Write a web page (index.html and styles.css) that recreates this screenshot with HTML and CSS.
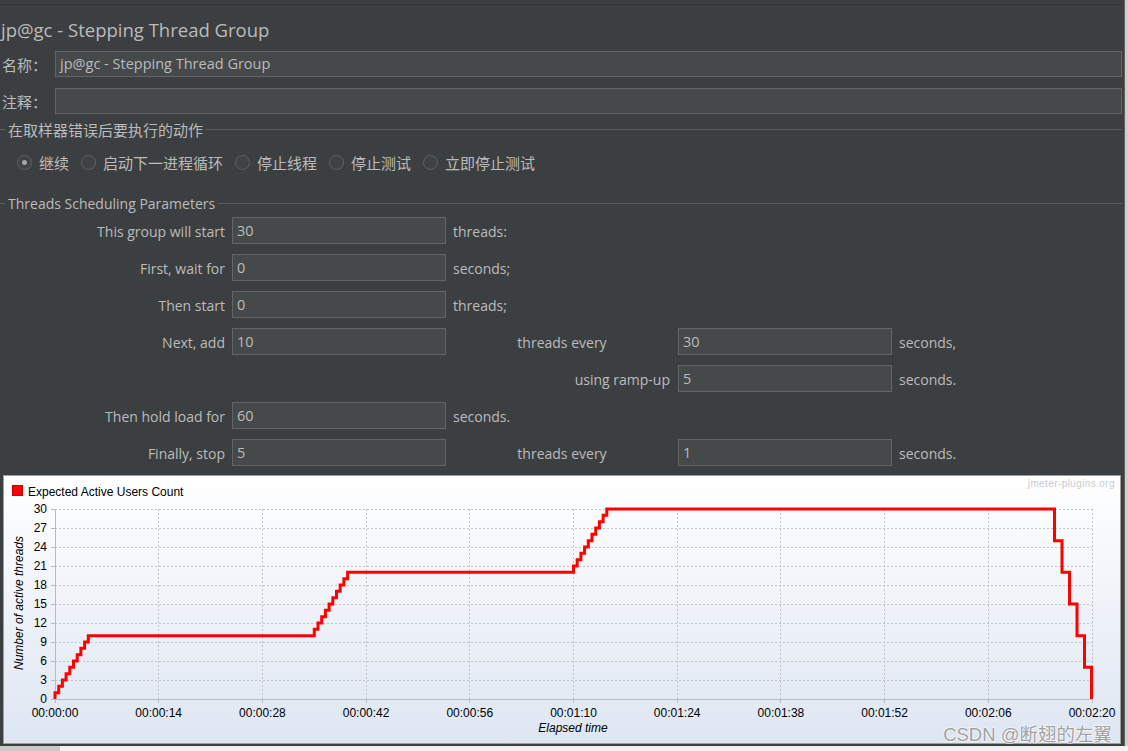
FILE: index.html
```html
<!DOCTYPE html>
<html lang="zh">
<head>
<meta charset="utf-8">
<title>jp@gc - Stepping Thread Group</title>
<link rel="stylesheet" href="styles.css">
</head>
<body>
<div class="screen">
  <div class="window">
    <div class="topbar"></div>
    <h1 class="title">jp@gc - Stepping Thread Group</h1>

    <div class="field">
      <span class="field-label">名称：</span>
      <div class="input">jp@gc - Stepping Thread Group</div>
    </div>
    <div class="field">
      <span class="field-label">注释：</span>
      <div class="input"></div>
    </div>

    <div class="group-title cjk"><span>在取样器错误后要执行的动作</span></div>
    <div class="radios">
      <label class="radio"><span class="radio-dot checked"></span><span>继续</span></label>
      <label class="radio"><span class="radio-dot"></span><span>启动下一进程循环</span></label>
      <label class="radio"><span class="radio-dot"></span><span>停止线程</span></label>
      <label class="radio"><span class="radio-dot"></span><span>停止测试</span></label>
      <label class="radio"><span class="radio-dot"></span><span>立即停止测试</span></label>
    </div>

    <div class="group-title params-title"><span>Threads Scheduling Parameters</span></div>
    <div class="params">
      <span class="lbl">This group will start</span>
      <div class="input cell">30</div>
      <span class="unit span-rest">threads:</span>

      <span class="lbl">First, wait for</span>
      <div class="input cell">0</div>
      <span class="unit span-rest">seconds;</span>

      <span class="lbl">Then start</span>
      <div class="input cell">0</div>
      <span class="unit span-rest">threads;</span>

      <span class="lbl">Next, add</span>
      <div class="input cell">10</div>
      <span class="mid">threads every</span>
      <div class="input cell">30</div>
      <span class="unit">seconds,</span>

      <span class="mid-right col3">using ramp-up</span>
      <div class="input cell">5</div>
      <span class="unit">seconds.</span>

      <span class="lbl">Then hold load for</span>
      <div class="input cell">60</div>
      <span class="unit span-rest">seconds.</span>

      <span class="lbl">Finally, stop</span>
      <div class="input cell">5</div>
      <span class="mid">threads every</span>
      <div class="input cell">1</div>
      <span class="unit">seconds.</span>
    </div>

    <div class="chart">
      <svg class="chart-svg" width="1118" height="269" viewBox="3 475 1118 269" xmlns="http://www.w3.org/2000/svg">
        <defs>
          <linearGradient id="bg" x1="0" y1="0" x2="0" y2="1">
            <stop offset="0" stop-color="#ffffff"/>
            <stop offset="1" stop-color="#dee6f2"/>
          </linearGradient>
        </defs>
        <rect x="3.5" y="475.5" width="1117" height="268" fill="url(#bg)" stroke="#9d9d9d"/>

        <text class="brand" x="1115" y="487" text-anchor="end">jmeter-plugins.org</text>

        <rect x="12.5" y="485.5" width="10" height="10" fill="#ff0000" stroke="#c80000"/>
        <text class="legend" x="28" y="496">Expected Active Users Count</text>

        <g class="grid">
          <path d="M55 509.5H1092 M55 528.5H1092 M55 547.5H1092 M55 566.5H1092 M55 585.5H1092 M55 604.5H1092 M55 623.5H1092 M55 642.5H1092 M55 661.5H1092 M55 680.5H1092"/>
          <path d="M158.5 509V699 M262.5 509V699 M366.5 509V699 M469.5 509V699 M573.5 509V699 M677.5 509V699 M780.5 509V699 M884.5 509V699 M988.5 509V699 M1092.5 509V699"/>
        </g>
        <g class="axis">
          <path d="M55.5 509V699.5 M55 699.5H1092"/>
          <path d="M51 509.5H55 M51 528.5H55 M51 547.5H55 M51 566.5H55 M51 585.5H55 M51 604.5H55 M51 623.5H55 M51 642.5H55 M51 661.5H55 M51 680.5H55 M51 699.5H55"/>
          <path d="M55.5 699V703 M158.5 699V703 M262.5 699V703 M366.5 699V703 M469.5 699V703 M573.5 699V703 M677.5 699V703 M780.5 699V703 M884.5 699V703 M988.5 699V703 M1092.5 699V703"/>
        </g>

        <g class="ylabels">
          <text x="47" y="513">30</text>
          <text x="47" y="532">27</text>
          <text x="47" y="551">24</text>
          <text x="47" y="570">21</text>
          <text x="47" y="589">18</text>
          <text x="47" y="608">15</text>
          <text x="47" y="627">12</text>
          <text x="47" y="646">9</text>
          <text x="47" y="665">6</text>
          <text x="47" y="684">3</text>
          <text x="47" y="703">0</text>
        </g>
        <g class="xlabels">
          <text x="55" y="717">00:00:00</text>
          <text x="158.7" y="717">00:00:14</text>
          <text x="262.4" y="717">00:00:28</text>
          <text x="366.1" y="717">00:00:42</text>
          <text x="469.8" y="717">00:00:56</text>
          <text x="573.5" y="717">00:01:10</text>
          <text x="677.2" y="717">00:01:24</text>
          <text x="780.9" y="717">00:01:38</text>
          <text x="884.6" y="717">00:01:52</text>
          <text x="988.3" y="717">00:02:06</text>
          <text x="1092" y="717">00:02:20</text>
        </g>
        <text class="axis-title" x="573" y="732" text-anchor="middle">Elapsed time</text>
        <text class="axis-title" transform="translate(23 603) rotate(-90)" text-anchor="middle">Number of active threads</text>

        <path class="series" d="M55 699V692.7H58.7V686.3H62.4V680H66.1V673.7H69.8V667.3H73.5V661H77.2V654.7H80.9V648.3H84.6V642H88.3V635.7H314.3V629.3H318V623H321.7V616.7H325.4V610.3H329.1V604H332.8V597.7H336.5V591.3H340.2V585H343.9V578.7H347.6V572.3H573.5V566H577.2V559.7H580.9V553.3H584.6V547H588.3V540.7H592V534.3H595.7V528H599.4V521.7H603.1V515.3H606.8V509H1054.5V540.7H1062V572.3H1069.5V604H1077V635.7H1084.5V667.3H1091.5V699"/>

        <text class="watermark" x="1112" y="741" text-anchor="end">CSDN @断翅的左翼</text>
      </svg>
    </div>
  </div>
  <div class="edge"></div>
</div>
<div class="under"></div>
</body>
</html>
```

FILE: styles.css
```css
html, body {
  margin: 0;
  padding: 0;
}

body {
  width: 1128px;
  height: 751px;
  overflow: hidden;
  background: #e6e6e6;
  font-family: "Open Sans", "Noto Sans CJK SC", sans-serif;
  color: #bbbbbb;
}

.screen {
  display: flex;
  height: 746px;
}

.window {
  width: 1124px;
  box-sizing: border-box;
  padding-right: 2px;
  background: #3c3f41;
  display: flex;
  flex-direction: column;
}

.edge {
  flex: 1;
  background: #cfcfcf;
  border-left: 1px solid #5f6163;
}

.under {
  height: 5px;
  background: linear-gradient(to right, #c9c9c9 0, #c9c9c9 60px, #f2f2f2 60px);
}

.topbar {
  height: 4px;
  border-bottom: 1px solid #313335;
}

.title {
  margin: 0;
  height: 42px;
  padding: 4px 0 0 1px;
  line-height: 42px;
  font-size: 18.5px;
  font-weight: normal;
  white-space: nowrap;
  color: #bbbbbb;
}

.field {
  display: flex;
  align-items: center;
  height: 26px;
}

.field + .field {
  margin-top: 11px;
}

.field-label {
  width: 53px;
  padding-left: 2px;
  font-size: 15px;
  font-family: "Noto Sans CJK SC", sans-serif;
  white-space: nowrap;
}

.input {
  box-sizing: border-box;
  height: 26px;
  background: #45494a;
  border: 1px solid #646464;
  padding-left: 4px;
  line-height: 24px;
  font-size: 14.5px;
  color: #bbbbbb;
  white-space: nowrap;
}

.field .input {
  flex: 1;
}

.group-title {
  display: flex;
  align-items: center;
  gap: 3px;
  height: 32px;
  font-size: 15px;
  white-space: nowrap;
}

.group-title.cjk {
  font-family: "Noto Sans CJK SC", sans-serif;
  height: 31px;
  padding-bottom: 1px;
}

.group-title::before {
  content: "";
  width: 5px;
  border-top: 1px solid #595c5e;
}

.group-title::after {
  content: "";
  flex: 1;
  border-top: 1px solid #595c5e;
}

.radios {
  display: flex;
  align-items: center;
  height: 33px;
  padding: 0 0 1px 17px;
  gap: 12px;
  font-size: 15px;
  font-family: "Noto Sans CJK SC", sans-serif;
}

.radio {
  display: flex;
  align-items: center;
  gap: 7px;
}

.radio-dot {
  width: 15px;
  height: 15px;
  box-sizing: border-box;
  border-radius: 50%;
  border: 1px solid #5f6264;
  background: #3f4244;
  display: flex;
  align-items: center;
  justify-content: center;
}

.radio-dot.checked::after {
  content: "";
  width: 5px;
  height: 5px;
  border-radius: 50%;
  background: #a6a6a6;
}

.params-title {
  margin-top: 10px;
  height: 27px;
  font-size: 14px;
}

.params {
  display: grid;
  grid-template-columns: 232px 214px 232px 214px 1fr;
  grid-auto-rows: 27px;
  row-gap: 10px;
  font-size: 14px;
  white-space: nowrap;
}

.params .input {
  height: 27px;
  line-height: 25px;
}

.lbl,
.unit,
.mid,
.mid-right {
  align-self: center;
  padding-top: 2px;
}

.lbl {
  grid-column: 1;
  text-align: right;
  padding-right: 7px;
}

.unit {
  padding-left: 7px;
}

.span-rest {
  grid-column: 3 / -1;
}

.mid {
  text-align: center;
}

.mid-right {
  text-align: right;
  padding-right: 8px;
}

.col3 {
  grid-column: 3;
}

.chart {
  margin: 9px 0 0 3px;
  width: 1118px;
  height: 269px;
}

.chart-svg {
  display: block;
}

.chart-svg text {
  font-family: "Liberation Sans", Arial, sans-serif;
  font-size: 12px;
  fill: #000000;
}

.chart-svg .brand {
  font-size: 10px;
  fill: #c8ccd1;
  letter-spacing: 0.4px;
}

.grid path {
  fill: none;
  stroke: #c3c3c8;
  stroke-width: 1;
  stroke-dasharray: 2 2;
}

.axis path {
  fill: none;
  stroke: #b4bac6;
  stroke-width: 1;
}

.ylabels text {
  text-anchor: end;
}

.xlabels text {
  text-anchor: middle;
}

.chart-svg .axis-title {
  font-style: italic;
}

.series {
  fill: none;
  stroke: #ff0000;
  stroke-width: 3;
  stroke-linejoin: miter;
}

.chart-svg .watermark {
  font-family: "Liberation Sans", "Noto Sans CJK SC", sans-serif;
  font-size: 18.5px;
  fill: #8c8c8c;
  fill-opacity: 0.8;
  stroke: #ffffff;
  stroke-opacity: 0.6;
  stroke-width: 1.5px;
  paint-order: stroke;
}
```
